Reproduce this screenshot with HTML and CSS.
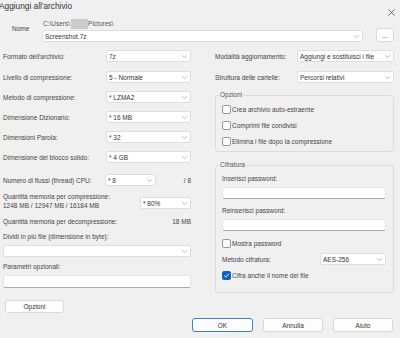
FILE: index.html
```html
<!DOCTYPE html>
<html>
<head>
  <title>Aggiungi all'archivio</title>
  <meta charset="utf-8">
  <link rel="stylesheet" href="styles.css">
</head>
<body>
  <div class="dialog">
    <div class="titlebar">
      <span class="title">Aggiungi all'archivio</span>
      <svg class="close" width="7" height="7" viewBox="0 0 7 7"><path d="M0.5 0.5 L6.5 6.5 M6.5 0.5 L0.5 6.5" stroke="#444" stroke-width="0.8"/></svg>
    </div>

    <div class="name-row">
      <span class="name-label">Nome</span>
      <div class="name-field">
        <div class="path">C:\Users\<span class="hidden-user"></span>Pictures\</div>
        <div class="select name-combo"><span>Screenshot.7z</span><svg class="chev" width="5" height="3" viewBox="0 0 5 3"><path d="M0.3 0.3 L2.5 2.5 L4.7 0.3" fill="none" stroke="#8a8a8a" stroke-width="0.6"/></svg></div>
      </div>
      <button class="btn browse">...</button>
    </div>

    <div class="columns">
      <div class="left">
        <div class="row">
          <span>Formato dell'archivio:</span>
          <div class="select sel-left"><span>7z</span><svg class="chev" width="5" height="3" viewBox="0 0 5 3"><path d="M0.3 0.3 L2.5 2.5 L4.7 0.3" fill="none" stroke="#8a8a8a" stroke-width="0.6"/></svg></div>
        </div>
        <div class="row r2">
          <span>Livello di compressione:</span>
          <div class="select sel-left"><span>5 - Normale</span><svg class="chev" width="5" height="3" viewBox="0 0 5 3"><path d="M0.3 0.3 L2.5 2.5 L4.7 0.3" fill="none" stroke="#8a8a8a" stroke-width="0.6"/></svg></div>
        </div>
        <div class="row rn">
          <span>Metodo di compressione:</span>
          <div class="select sel-left"><span>* LZMA2</span><svg class="chev" width="5" height="3" viewBox="0 0 5 3"><path d="M0.3 0.3 L2.5 2.5 L4.7 0.3" fill="none" stroke="#8a8a8a" stroke-width="0.6"/></svg></div>
        </div>
        <div class="row rn">
          <span>Dimensione Dizionario:</span>
          <div class="select sel-left"><span>* 16 MB</span><svg class="chev" width="5" height="3" viewBox="0 0 5 3"><path d="M0.3 0.3 L2.5 2.5 L4.7 0.3" fill="none" stroke="#8a8a8a" stroke-width="0.6"/></svg></div>
        </div>
        <div class="row rn">
          <span>Dimensioni Parola:</span>
          <div class="select sel-left"><span>* 32</span><svg class="chev" width="5" height="3" viewBox="0 0 5 3"><path d="M0.3 0.3 L2.5 2.5 L4.7 0.3" fill="none" stroke="#8a8a8a" stroke-width="0.6"/></svg></div>
        </div>
        <div class="row rn">
          <span>Dimensione del blocco solido:</span>
          <div class="select sel-left"><span>* 4 GB</span><svg class="chev" width="5" height="3" viewBox="0 0 5 3"><path d="M0.3 0.3 L2.5 2.5 L4.7 0.3" fill="none" stroke="#8a8a8a" stroke-width="0.6"/></svg></div>
        </div>
        <div class="row threads">
          <span class="thr-label">Numero di flussi (thread) CPU:</span>
          <div class="select sel-small"><span>* 8</span><svg class="chev" width="5" height="3" viewBox="0 0 5 3"><path d="M0.3 0.3 L2.5 2.5 L4.7 0.3" fill="none" stroke="#8a8a8a" stroke-width="0.6"/></svg></div>
          <span class="thr-max">/ 8</span>
        </div>
        <div class="mem-row">
          <div class="mem-text">
            <div>Quantità memoria per compressione:</div>
            <div>1248 MB / 12947 MB / 16184 MB</div>
          </div>
          <div class="select sel-small mem-sel"><span>* 80%</span><svg class="chev" width="5" height="3" viewBox="0 0 5 3"><path d="M0.3 0.3 L2.5 2.5 L4.7 0.3" fill="none" stroke="#8a8a8a" stroke-width="0.6"/></svg></div>
        </div>
        <div class="decomp-row">
          <span>Quantità memoria per decompressione:</span>
          <span>18 MB</span>
        </div>
        <div class="field-label split-label">Dividi in più file (dimensione in byte):</div>
        <div class="select wide-combo"><span></span><svg class="chev" width="5" height="3" viewBox="0 0 5 3"><path d="M0.3 0.3 L2.5 2.5 L4.7 0.3" fill="none" stroke="#8a8a8a" stroke-width="0.6"/></svg></div>
        <div class="field-label param-label">Parametri opzionali:</div>
        <div class="text-input param-input"></div>
        <button class="btn options-btn">Opzioni</button>
      </div>

      <div class="right">
        <div class="row">
          <span>Modalità aggiornamento:</span>
          <div class="select sel-right"><span>Aggiungi e sostituisci i file</span><svg class="chev" width="5" height="3" viewBox="0 0 5 3"><path d="M0.3 0.3 L2.5 2.5 L4.7 0.3" fill="none" stroke="#8a8a8a" stroke-width="0.6"/></svg></div>
        </div>
        <div class="row r2">
          <span>Struttura delle cartelle:</span>
          <div class="select sel-right"><span>Percorsi relativi</span><svg class="chev" width="5" height="3" viewBox="0 0 5 3"><path d="M0.3 0.3 L2.5 2.5 L4.7 0.3" fill="none" stroke="#8a8a8a" stroke-width="0.6"/></svg></div>
        </div>

        <fieldset class="group options-group">
          <legend>Opzioni</legend>
          <div class="check"><span class="box"></span>Crea archivio auto-estraente</div>
          <div class="check"><span class="box"></span>Comprimi file condivisi</div>
          <div class="check"><span class="box"></span>Elimina i file dopo la compressione</div>
        </fieldset>

        <fieldset class="group crypt-group">
          <legend>Cifratura</legend>
          <div class="field-label">Inserisci password:</div>
          <div class="text-input pw-input"></div>
          <div class="field-label pw2-label">Reinserisci password:</div>
          <div class="text-input pw-input"></div>
          <div class="check show-pw"><span class="box"></span>Mostra password</div>
          <div class="row method-row">
            <span>Metodo cifratura:</span>
            <div class="select sel-method"><span>AES-256</span><svg class="chev" width="5" height="3" viewBox="0 0 5 3"><path d="M0.3 0.3 L2.5 2.5 L4.7 0.3" fill="none" stroke="#8a8a8a" stroke-width="0.6"/></svg></div>
          </div>
          <div class="check enc-names"><span class="box checked"><svg width="7" height="7" viewBox="0 0 7 7"><path d="M1.3 3.6 L2.9 5.1 L5.8 1.9" fill="none" stroke="#fff" stroke-width="0.9"/></svg></span>Cifra anche il nome dei file</div>
        </fieldset>
      </div>
    </div>

    <div class="footer">
      <button class="btn ok-btn">OK</button>
      <button class="btn">Annulla</button>
      <button class="btn">Aiuto</button>
    </div>
  </div>
</body>
</html>
```

FILE: styles.css
```css
/* Finestra di dialogo 7-Zip */

body {
  margin: 0;
  background-color: #f0f0f0;
  font-family: "Liberation Sans", Arial, sans-serif;
  font-size: 6.5px;
  color: #444;
  overflow: hidden;
}

.dialog {
  width: 400px;
  height: 338px;
}

.titlebar {
  display: flex;
  justify-content: space-between;
  height: 17px;
}

.title {
  font-size: 8.3px;
  line-height: 12px;
  margin-left: -1px;
  color: #333;
}

.close {
  margin: 9px 5px 0 0;
}

/* riga Nome */
.name-row {
  display: flex;
  height: 25px;
  padding-left: 12px;
}

.name-label {
  width: 30px;
  margin-top: 8px;
  line-height: 8px;
}

.name-field {
  width: 321px;
}

.path {
  margin-top: 2px;
  line-height: 10px;
  padding-left: 1px;
  color: #555;
}

.hidden-user {
  display: inline-block;
  width: 17px;
  height: 10px;
  margin-left: 1px;
  vertical-align: top;
  background-color: #cacaca;
}

.name-combo {
  margin-top: 1px;
}

.browse {
  margin-left: 13px;
  margin-top: 11px;
  width: 18px;
  height: 14px;
  color: #aaa;
}

/* controlli */
.select {
  box-sizing: border-box;
  height: 12px;
  display: flex;
  align-items: center;
  justify-content: space-between;
  padding: 0 3px 0 2px;
  background-color: #fff;
  border: 1px solid #dedede;
  border-radius: 2px;
  color: #333;
  white-space: nowrap;
}

.text-input {
  box-sizing: border-box;
  background-color: #fff;
  border: 1px solid #e4e4e4;
  border-bottom-color: #ababab;
  border-radius: 2px;
}

.btn {
  box-sizing: border-box;
  padding: 0;
  font-family: "Liberation Sans", Arial, sans-serif;
  font-size: 6.5px;
  color: #333;
  background-color: #fdfdfd;
  border: 1px solid #d8d8d8;
  border-radius: 3px;
}

.columns {
  display: flex;
  gap: 24px;
  margin-top: 8px;
  padding-left: 3px;
}

.left {
  width: 188px;
  display: flex;
  flex-direction: column;
}

.right {
  width: 179px;
  display: flex;
  flex-direction: column;
}

.row {
  display: flex;
  align-items: center;
  justify-content: space-between;
  height: 12px;
  white-space: nowrap;
}

.r2 {
  margin-top: 9px;
}

.rn {
  margin-top: 8px;
}

.sel-left {
  width: 85px;
}

.sel-right {
  width: 97px;
}

.sel-small {
  width: 51px;
}

.threads {
  margin-top: 11px;
  justify-content: flex-start;
}

.thr-label {
  width: 102px;
}

.thr-max {
  flex: 1;
  text-align: right;
}

.mem-row {
  display: flex;
  justify-content: space-between;
  margin-top: 6px;
  line-height: 9px;
  white-space: nowrap;
}

.mem-sel {
  margin-top: 5px;
}

.decomp-row {
  display: flex;
  justify-content: space-between;
  margin-top: 7px;
  line-height: 9px;
}

.field-label {
  line-height: 8px;
}

.split-label {
  margin-top: 7px;
}

.wide-combo {
  margin-top: 4px;
}

.param-label {
  margin-top: 6px;
}

.param-input {
  margin-top: 4px;
  height: 13px;
}

.options-btn {
  margin-top: 12px;
  margin-left: 2px;
  width: 59px;
  height: 13px;
}

/* gruppi */
.group {
  margin: 0;
  border: 1px solid #dcdcdc;
  border-radius: 3px;
  padding: 5px 7px 5px 6px;
}

.group legend {
  padding: 0 1px;
  margin-left: -3px;
  line-height: 8px;
  color: #555;
}

.options-group {
  margin-top: 8px;
  display: flex;
  flex-direction: column;
  gap: 6px;
}

.check {
  display: flex;
  align-items: center;
  height: 10px;
  white-space: nowrap;
}

.box {
  box-sizing: border-box;
  width: 9px;
  height: 9px;
  margin-right: 1px;
  border: 1px solid #999;
  border-radius: 2px;
  background-color: #fafafa;
  display: flex;
  align-items: center;
  justify-content: center;
}

.box.checked {
  background-color: #0f62c0;
  border-color: #0f62c0;
}

.crypt-group {
  margin-top: 9px;
  padding-top: 6px;
  padding-bottom: 12px;
}

.pw-input {
  margin-top: 4px;
  height: 12px;
}

.pw2-label {
  margin-top: 8px;
}

.show-pw {
  margin-top: 7px;
}

.method-row {
  margin-top: 5px;
}

.sel-method {
  width: 66px;
}

.enc-names {
  margin-top: 5px;
}

/* pulsanti in basso */
.footer {
  display: flex;
  justify-content: flex-end;
  gap: 10px;
  margin-top: 5px;
  padding-right: 7px;
}

.footer .btn {
  width: 60px;
  height: 14px;
}

.footer .ok-btn {
  width: 61px;
  border-color: #3b7fd0;
}
```
